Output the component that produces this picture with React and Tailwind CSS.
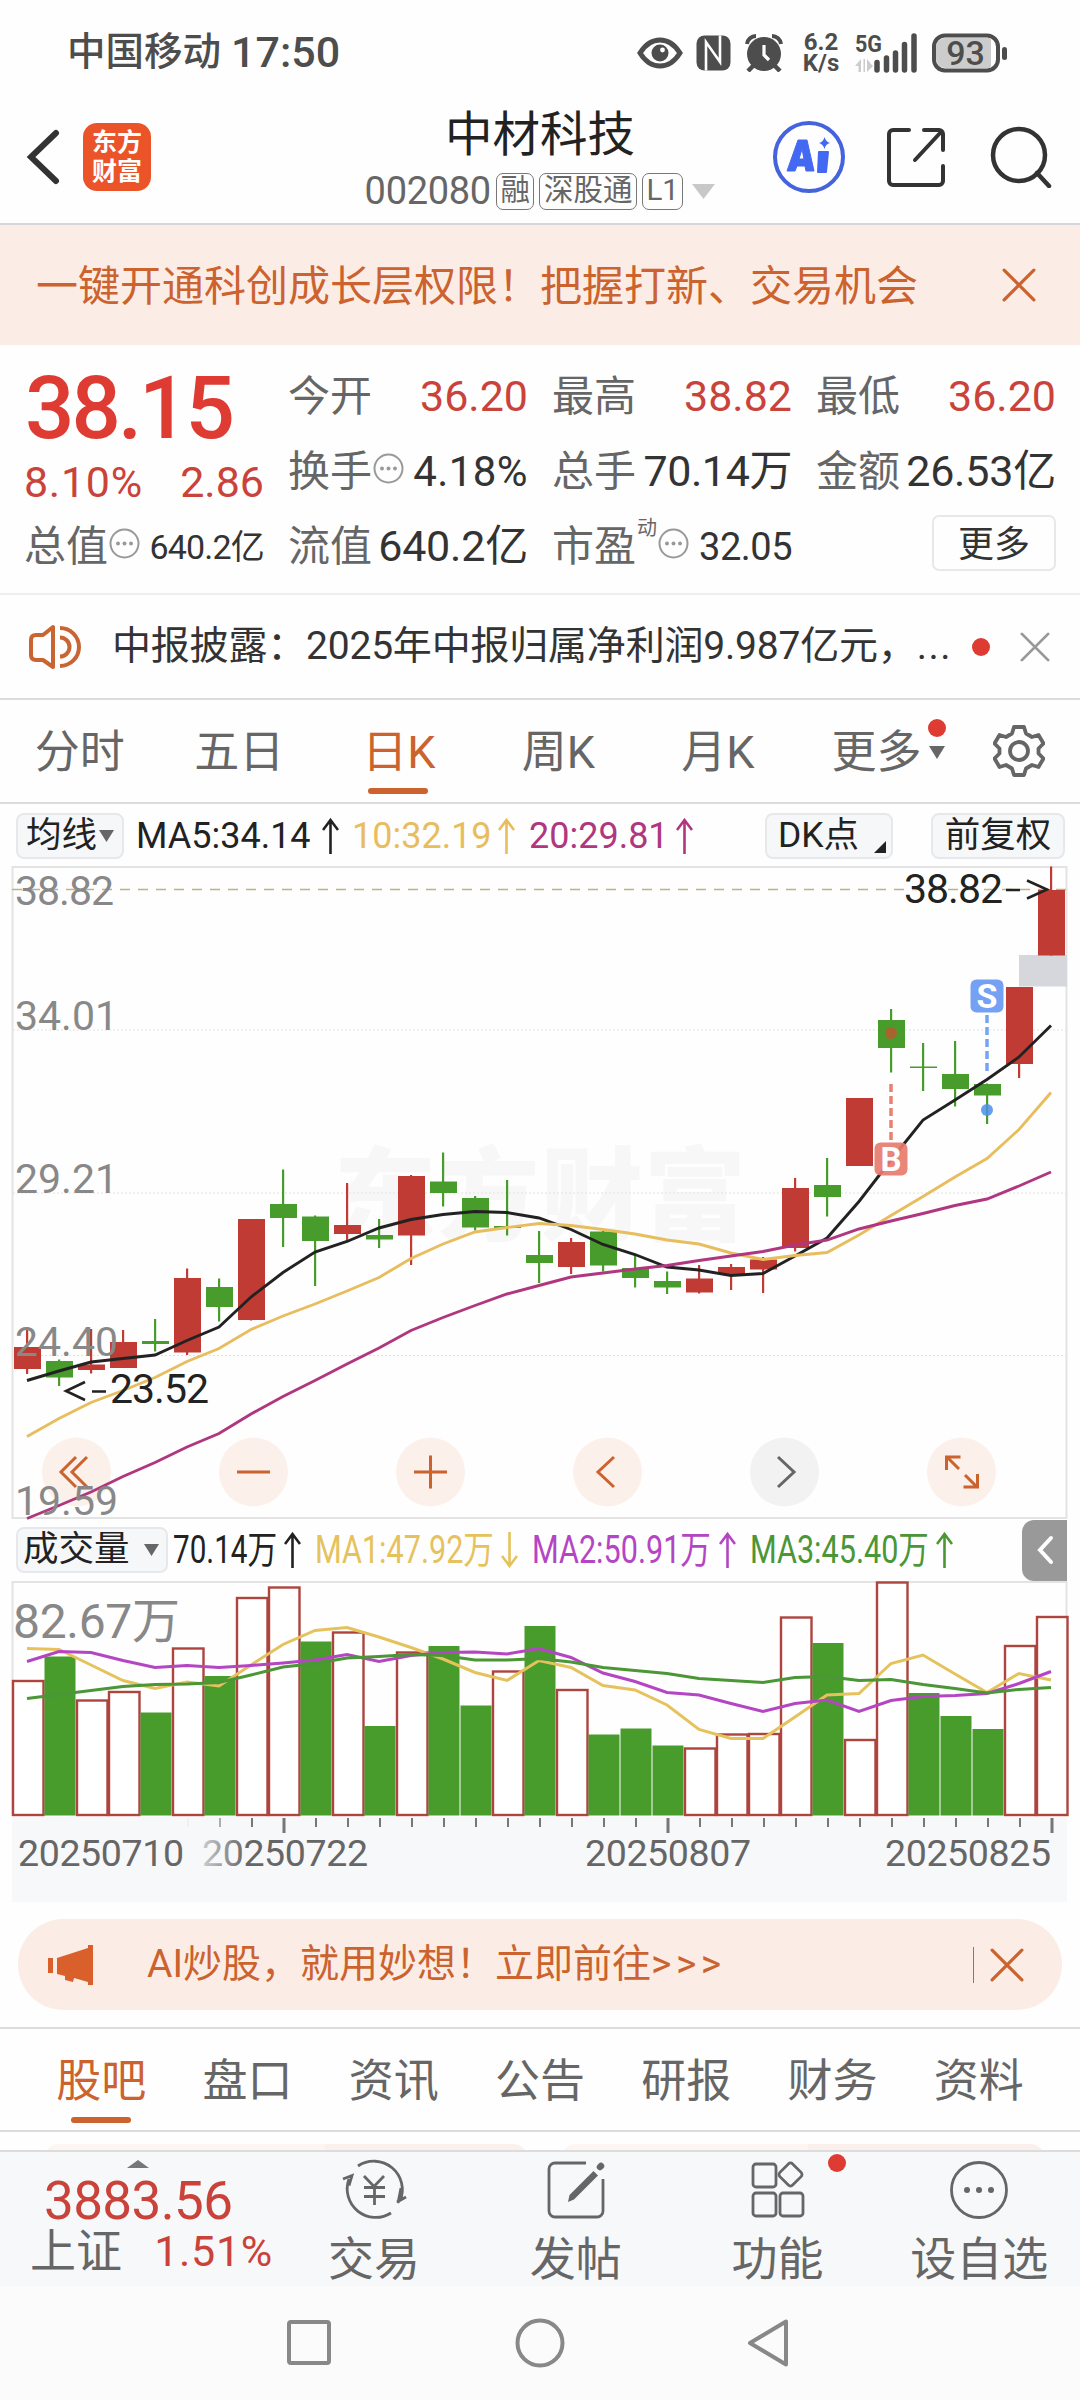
// src/App.jsx
import React, { useState } from 'react'

const RED = '#bf3b34'
const GREEN = '#479c2c'

// [up, high, bodyTop, bodyBottom, low]
const CANDLES = [
  [1, 463.5, 481, 503, 508], [0, 493.5, 495, 511.5, 520], [1, 463, 498.5, 504, 507.5],
  [1, 464, 476, 502, 502], [0, 453, 475, 478, 485.5], [1, 402.5, 412, 486.5, 489],
  [0, 412.5, 421, 441, 455.5], [1, 353, 353, 454, 454.5], [0, 303.5, 338, 352, 381],
  [0, 349.5, 350.5, 375, 420], [1, 317, 359, 368, 374], [0, 353, 369, 373.5, 382],
  [1, 309, 310, 369.5, 399], [0, 286.5, 315.5, 327, 340.5], [0, 330, 332, 361.5, 364.5],
  [0, 314, 360, 362, 369.5], [0, 365, 389, 397, 417], [1, 372, 376, 401, 408],
  [0, 365, 365.5, 399.5, 405.5], [0, 390, 402, 412, 421.5], [0, 405.5, 415, 421.5, 428],
  [1, 399, 412.5, 426.5, 427.5], [1, 398, 401, 408, 424], [1, 391, 393.5, 403.5, 427],
  [1, 312, 322, 382, 385.5], [0, 292, 319, 331, 350.5], [1, 232, 232, 300, 300],
  [0, 143, 154, 182, 206.5], [0, 177, 200.5, 202, 225], [0, 175, 208, 223, 240.5],
  [0, 217.5, 218, 229.5, 258], [1, 121, 121, 198, 212], [1, 0.5, 24, 89.5, 89.5],
]

const MA5 = [514.5, 505, 496, 492.5, 489, 474.5, 461, 431, 406.5, 386, 375.5, 362, 353.5, 348.5, 345.5, 346.5, 352, 363.5, 378.5, 388.5, 401, 404, 409.5, 407.5, 390, 372, 335.5, 294, 254, 234, 213.5, 191, 159.5]
const MA10 = [570.5, 552.5, 536.5, 524.5, 511.5, 495.5, 482.5, 463.5, 450, 438, 425, 411.5, 392.5, 378, 366, 361.5, 357.5, 359.5, 363.5, 368, 374, 378, 387, 393.5, 389.5, 386.5, 369, 349.5, 330.5, 311, 292.5, 263.5, 226.5]
const MA20 = [652.5, 639.5, 626, 610.5, 596.5, 581, 567.5, 548, 530.5, 514.5, 498, 482, 464.5, 451.5, 439.5, 428, 419.5, 411, 407, 403, 399.5, 394.5, 390, 385.5, 379, 374, 363, 355, 347.5, 339.5, 333, 320, 306]

// [up, top]
const VOLUMES = [
  [1, 100], [0, 75.5], [1, 119.5], [1, 111], [0, 131.5], [1, 67.5], [0, 95], [1, 17], [1, 6.5],
  [0, 60.5], [1, 51.5], [0, 145], [1, 71.5], [0, 65], [0, 124.5], [1, 90.5], [0, 45], [1, 109],
  [0, 153.5], [0, 147.5], [0, 164.5], [1, 167.5], [1, 153.5], [1, 153], [1, 36.5], [0, 62],
  [1, 159], [1, 1.5], [0, 112], [0, 135], [0, 148], [1, 65], [1, 36],
]
const VMA1 = [67.5, 68.5, 84, 99.5, 107.5, 101, 105, 84, 63.5, 49.5, 46.5, 56, 66.5, 78, 91.5, 99.5, 79.5, 86.5, 104.5, 109, 124, 148.5, 157.5, 157.5, 136, 114, 112.5, 82.5, 74, 93, 111.5, 92.5, 99]
const VMA2 = [80.5, 70.5, 71.5, 79.5, 86.5, 84.5, 86.5, 84.5, 82, 79, 73.5, 80.5, 74.5, 71.5, 71, 73, 67.5, 76.5, 92, 100.5, 111.5, 114, 122.5, 130.5, 122.5, 119, 130.5, 119.5, 115.5, 114.5, 112.5, 102.5, 90.5]
const VMA3 = [117.5, 113.5, 109.5, 105.5, 103.5, 103, 101.5, 94, 86, 82.5, 77, 75.5, 73.5, 74.5, 79, 79, 77.5, 81, 86.5, 89.5, 92.5, 97.5, 99.5, 101.5, 96.5, 95.5, 99.5, 98.5, 103.5, 107.5, 112, 108.5, 106.5]

const cx = (i) => 27 + i * 32
const points = (values) => values.map((y, i) => `${cx(i)},${y}`).join(' ')

function StatusBar() {
  return (
    <div className="flex h-[105px] items-center pl-[67px] pr-[71px] text-[#4d4d4d]">
      <span className="text-[38.5px] font-medium">中国移动</span>
      <span className="ml-[10px] text-[43px] font-medium">17:50</span>
      <svg className="ml-auto" width="46" height="32" viewBox="0 0 46 32" fill="none">
        <path d="M3 16C8 8 15 3 23 3s15 5 20 13c-5 8-12 13-20 13S8 24 3 16z" stroke="#4d4d4d" strokeWidth="5" />
        <circle cx="23" cy="16" r="8.5" fill="#4d4d4d" />
        <circle cx="25.5" cy="13" r="2.4" fill="#fff" />
      </svg>
      <svg className="ml-[13px]" width="35" height="36" viewBox="0 0 35 36">
        <rect x="0.5" y="0.5" width="34" height="35" rx="8" fill="#4d4d4d" />
        <path d="M10 35.500V7L24 27V0.500" fill="none" stroke="#fff" strokeWidth="2.600" />
      </svg>
      <svg className="ml-[14px]" width="38" height="38" viewBox="0 0 38 38">
        <circle cx="19" cy="20" r="17" fill="#4d4d4d" />
        <path d="M2 10a9 9 0 0 1 9-8M36 10a9 9 0 0 0-9-8" fill="none" stroke="#4d4d4d" strokeWidth="4" />
        <path d="M8 32l-5 5M30 32l5 5" stroke="#4d4d4d" strokeWidth="4.5" />
        <path d="M19 11v10l5 5" fill="none" stroke="#fff" strokeWidth="3.2" />
      </svg>
      <div className="ml-[19px] flex w-[38px] flex-col items-center text-[24px] font-bold leading-[20.500px]">
        <span>6.2</span>
        <span>K/s</span>
      </div>
      <svg className="ml-[15px] overflow-visible" width="64" height="40" viewBox="0 0 64 40">
        <text x="0" y="19" fontSize="24" fontWeight="700" fill="#4d4d4d" textLength="27" lengthAdjust="spacingAndGlyphs">5G</text>
        <path d="M0 33l6-7v13H3.500v-6zM8.500 26v13h1.500v-13zM18 33l-6 6v-13l4 5z" fill="#ccc" />
        <path d="M22 29.500v7.500M31.500 25v12M40.500 20v17M49.500 11.500v25.500M59 3v34" stroke="#4d4d4d" strokeWidth="5.500" strokeLinecap="round" />
      </svg>
      <svg className="ml-[13px]" width="77" height="40" viewBox="0 0 77 40">
        <rect x="2" y="2.500" width="64" height="35" rx="11" fill="#fff" stroke="#4d4d4d" strokeWidth="4" />
        <path d="M13 5H59v30H13a9 9 0 0 1-9-9V14a9 9 0 0 1 9-9z" fill="#ccc" />
        <rect x="70" y="14" width="5" height="13" rx="2.500" fill="#4d4d4d" />
        <text x="33.500" y="32" fontSize="34" fontWeight="500" fill="#4d4d4d" textAnchor="middle">93</text>
      </svg>
    </div>
  )
}

function Header() {
  return (
    <header className="flex h-[120px] items-start border-b-2 border-[#d6d6da]">
      <div className="flex w-[362px] items-center pl-[25px] pt-[18px]">
        <svg width="36" height="56" viewBox="0 0 36 56" fill="none" stroke="#333" strokeWidth="6" strokeLinecap="round">
          <path d="M31 4L6 28l25 24" />
        </svg>
        <div className="ml-[22px] flex h-[68px] w-[68px] flex-col items-center justify-center rounded-[14px] bg-[#ea5428] text-[25px] font-bold leading-[29px] text-white">
          <span>东方</span>
          <span>财富</span>
        </div>
      </div>
      <div className="flex w-[356px] flex-col items-center">
        <h1 className="h-[67px] text-[47.500px] leading-[60px] text-[#222]">中材科技</h1>
        <div className="flex h-[38px] items-center text-[#666]">
          <span className="mr-[5px] text-[38px] tracking-[-0.300px]">002080</span>
          <Tag>融</Tag>
          <Tag>深股通</Tag>
          <Tag>L1</Tag>
          <svg className="ml-[4px]" width="23" height="15"><path d="M0 0h23L11.500 15z" fill="#c8c8c8" /></svg>
        </div>
      </div>
      <div className="flex flex-1 items-center pl-[54px] pt-[14px]">
        <svg width="74" height="76" viewBox="0 0 74 76">
          <circle cx="37" cy="38" r="34" fill="none" stroke="#4463dc" strokeWidth="4" />
          <path d="M26 21h9l7 31h-8l-1-5h-8l-2 5h-8zm4 9l-3 10h5z" fill="#4368f2" stroke="#4368f2" strokeLinejoin="round" />
          <path d="M47 33h9l-2 20h-8z" fill="#4368f2" stroke="#4368f2" strokeWidth="2" strokeLinejoin="round" />
          <path d="M52.500 18q1.500 5 5.500 6q-4.500 1-5.500 6q-1.500-5-5.500-6q4.500-1 5.500-6z" fill="#4368f2" />
        </svg>
        <svg className="ml-[41px]" width="60" height="60" viewBox="0 0 60 60" fill="none" stroke="#333" strokeWidth="4" strokeLinecap="round">
          <path d="M22 3H6a4 4 0 0 0-4 4v47a4 4 0 0 0 4 4h46a4 4 0 0 0 4-4V39M37 3h15a4 4 0 0 1 4 4v16M54 5L28 33" />
        </svg>
        <svg className="ml-[43px]" width="62" height="62" viewBox="0 0 62 62" fill="none" stroke="#333" strokeWidth="4.500" strokeLinecap="round">
          <circle cx="29" cy="29" r="26" />
          <path d="M47 47l12 13" />
        </svg>
      </div>
    </header>
  )
}

function Tag({ children }) {
  return <span className="mr-[5px] flex h-[37px] items-center rounded-[7px] border border-[#777] px-[3.500px] text-[29.500px]">{children}</span>
}

function Cross({ size, color, className }) {
  return (
    <svg className={className} width={size} height={size} viewBox="0 0 32 32" stroke={color} strokeWidth="3" strokeLinecap="round">
      <path d="M2 2l28 28M30 2L2 30" />
    </svg>
  )
}

function Info() {
  return (
    <svg className="mb-[6px] ml-px shrink-0" width="31" height="31" viewBox="0 0 31 31">
      <circle cx="15.500" cy="15.500" r="14" fill="none" stroke="#999" strokeWidth="2" />
      <circle cx="9" cy="15.500" r="2" fill="#999" />
      <circle cx="15.500" cy="15.500" r="2" fill="#999" />
      <circle cx="22" cy="15.500" r="2" fill="#999" />
    </svg>
  )
}

function Stat({ label, value, up, info, sup, size = 'text-[43px]' }) {
  return (
    <div className="flex h-[75px] w-[239px] items-center whitespace-nowrap">
      <span className="-ml-px text-[42px] text-[#666]">{label}</span>
      {sup && <span className="mb-[38px] ml-px text-[20px] text-[#666]">{sup}</span>}
      {info && <Info />}
      <span className={`ml-auto ${size} ${up ? 'text-[#c9433b]' : 'text-[#333]'}`}>{value}</span>
    </div>
  )
}

function Quote() {
  return (
    <section className="flex h-[250px] gap-[25px] border-b-2 border-[#eee] pl-[25px] pt-[14px]">
      <div className="w-[239px]">
        <div className="h-[96px] text-[87px] font-medium leading-[98px] tracking-[-3px] text-[#de3b33]">38.15</div>
        <div className="-ml-px flex h-[54px] items-center justify-between text-[43px] text-[#c9433b]">
          <span className="tracking-[0.700px]">8.10%</span>
          <span>2.86</span>
        </div>
        <Stat label="总值" value="640.2亿" info size="text-[34px] tracking-[-0.800px]" />
      </div>
      <div>
        <Stat label="今开" value="36.20" up />
        <Stat label="换手" value="4.18%" info size="text-[42px] tracking-[0.400px]" />
        <Stat label="流值" value="640.2亿" size="text-[43px] tracking-[-0.200px]" />
      </div>
      <div>
        <Stat label="最高" value="38.82" up />
        <Stat label="总手" value="70.14万" size="text-[43px] tracking-[-0.400px]" />
        <Stat label="市盈" value="32.05" info sup="动" size="text-[38px] tracking-[-0.500px]" />
      </div>
      <div>
        <Stat label="最低" value="36.20" up />
        <Stat label="金额" value="26.53亿" size="text-[43px] tracking-[-0.200px]" />
        <button className="ml-auto mt-[6px] flex h-[56px] w-[124px] items-center justify-center rounded-[7px] border-2 border-[#e8e8e8] pt-[3px] text-[36px] text-[#333]">更多</button>
      </div>
    </section>
  )
}

function Notice() {
  return (
    <div className="flex h-[105px] items-center border-b-2 border-[#dcdcdc] pl-[28px]">
      <svg width="54" height="46" viewBox="0 0 54 46" fill="none" stroke="#c96533" strokeWidth="4">
        <path d="M25 3v40l-10-7H8q-5 0-5-5V16q0-5 5-5h7z" strokeLinejoin="round" />
        <path d="M32 13.500a9.500 9.500 0 0 1 0 19M32 4a19 19 0 0 1 0 38" />
      </svg>
      <p className="ml-[30px] w-[853px] whitespace-nowrap text-[39px] tracking-[-0.200px] text-[#333]">中报披露：2025年中报归属净利润9.987亿元，<span className="tracking-[1.500px]">...</span></p>
      <span className="ml-[7px] h-[18px] w-[18px] shrink-0 rounded-full bg-[#de3b33]"></span>
      <Cross className="ml-[30px] shrink-0" size={30} color="#999" />
    </div>
  )
}

function Gear() {
  return (
    <svg width="52" height="52" viewBox="0 0 52 52" fill="none" stroke="#666" strokeWidth="3.800" strokeLinejoin="round">
      <path d="M21 2h10l2 6.500 6 3.500 6.500-2 5 8.500-5 5v5l5 5-5 8.500-6.500-2-6 3.500-2 6.500H21l-2-6.500-6-3.500-6.500 2-5-8.500 5-5v-5l-5-5 5-8.500 6.500 2 6-3.500z" />
      <circle cx="26" cy="26" r="9" />
    </svg>
  )
}

function PeriodTabs() {
  const [active, setActive] = useState('日K')
  return (
    <nav className="flex h-[104px] items-center border-b-2 border-[#dcdcdc] text-[45px] text-[#666]">
      {['分时', '五日', '日K', '周K', '月K'].map((tab) => (
        <button key={tab} className={`relative h-full w-[159.500px] pt-[3px] ${active === tab ? 'text-[#cc622e]' : ''}`} onClick={() => setActive(tab)}>
          {tab}
          {active === tab && <span className="absolute bottom-[8px] left-[49px] h-[6px] w-[60px] rounded-full bg-[#cc622e]"></span>}
        </button>
      ))}
      <button className="relative ml-[34px] flex items-center pt-[3px]">
        更多
        <svg className="ml-[7px]" width="16" height="13"><path d="M0 0h16L8 13z" fill="#666" /></svg>
        <span className="absolute -top-[8px] right-[-1px] h-[18px] w-[18px] rounded-full bg-[#de3b33]"></span>
      </button>
      <div className="ml-[48px]"><Gear /></div>
    </nav>
  )
}

function Chip({ children, className }) {
  return <button className={`flex h-[46px] items-center rounded-[8px] border-2 border-[#e6e8ec] bg-[#f6f7f9] text-[35.500px] text-[#222] ${className}`}>{children}</button>
}

function Arrow({ color, down, className = '' }) {
  return (
    <svg className={`${down ? 'rotate-180' : ''} shrink-0 ${className}`} width="17" height="36" viewBox="0 0 17 36" fill="none" stroke={color} strokeWidth="2.600">
      <path d="M8.500 36V2M1 12l7.500-10L16 12" />
    </svg>
  )
}

function MaLegend() {
  return (
    <div className="flex h-[62px] items-center pl-[16px] pr-[15px] pt-[2px] text-[36px]">
      <Chip className="w-[108px] pl-[8px]">
        均线
        <svg className="ml-[2px]" width="15" height="12"><path d="M0 0h15L7.500 12z" fill="#666" /></svg>
      </Chip>
      <span className="ml-[12px] w-[186px] text-[#222]">MA5:34.14</span>
      <Arrow color="#222" />
      <span className="ml-[13px] w-[146px] text-[#e8bd5e]">10:32.19</span>
      <Arrow color="#e8bd5e" />
      <span className="ml-[14px] w-[147px] text-[#b0367f]">20:29.81</span>
      <Arrow color="#b0367f" />
      <Chip className="ml-auto w-[128px] justify-between pl-[11px] pr-[5px]">
        DK点
        <svg className="mt-[22px]" width="12" height="12"><path d="M12 0v12H0z" fill="#222" /></svg>
      </Chip>
      <Chip className="ml-[38px] w-[134px] justify-center">前复权</Chip>
    </div>
  )
}

const CONTROLS = [
  ['M76 -15L61 0l15 15M87 -15L72 0l15 15', 76.5],
  ['M237 0h33', 253.5],
  ['M414 0h33M430.500 -16.500v33', 430.5],
  ['M614 -15L598 0l16 15', 607.5],
  ['M778 -15L794 0l-16 15', 784.5],
  ['M946.500 -2v-13h14M947 -15l12 12M977.500 2v13h-14M977 15l-12 -12', 961.5],
]

function KChart() {
  return (
    <svg className="block overflow-visible" width="1080" height="653" viewBox="0 0 1080 653">
      <rect x="12.500" y="1" width="1054" height="651" fill="none" stroke="#e3e3e3" strokeWidth="2" />
      <text x="334" y="367" fontSize="102" fontWeight="900" fill="#f7f7f7" textLength="412">东方财富</text>
      {[164, 327, 489.5].map((y) => (
        <line key={y} x1="13" x2="1066" y1={y} y2={y} stroke="#e2e2e2" strokeDasharray="2 2" />
      ))}
      <line x1="12" x2="1066" y1="23.500" y2="23.500" stroke="#c4b083" strokeWidth="1.500" strokeDasharray="10 8" />
      <rect x="1019" y="89" width="48" height="31.500" fill="#d6d7dd" />
      {CONTROLS.map(([d, x]) => (
        <g key={x}>
          <circle cx={x} cy="606" r="34.500" fill={x === 784.5 ? '#f2f2f2' : '#fbf1ea'} />
          <path d={d} transform="translate(0 606)" fill="none" stroke={x === 784.5 ? '#666' : '#cc622e'} strokeWidth="3" />
        </g>
      ))}
      {CANDLES.map(([up, high, top, bottom, low], i) => (
        <g key={i} fill={up ? RED : GREEN}>
          <rect x={cx(i) - 1} y={high} width="2.200" height={low - high} />
          <rect x={cx(i) - 13} y={top} width="27" height={Math.max(bottom - top, 1.5)} />
        </g>
      ))}
      <g fill="none" strokeWidth="2.900">
        <polyline points={points(MA5)} stroke="#222" />
        <polyline points={points(MA10)} stroke="#e8bd5e" />
        <polyline points={points(MA20)} stroke="#b0367f" />
      </g>

      {/* sell / buy markers */}
      <line x1="987" x2="987" y1="149" y2="205" stroke="#74a5f4" strokeWidth="3.500" strokeDasharray="8 4" />
      <circle cx="987" cy="244" r="6" fill="#4b8ee8" fillOpacity="0.850" />
      <rect x="970.500" y="113.500" width="33" height="33" rx="6" fill="#74a1f3" />
      <text x="987" y="142" fontSize="34" fontWeight="700" fill="#fff" textAnchor="middle">S</text>
      <line x1="891" x2="891" y1="218" y2="274" stroke="#e88072" strokeWidth="3.500" strokeDasharray="8 4" />
      <circle cx="891" cy="167" r="6" fill="#a8642f" />
      <rect x="874.500" y="276.500" width="33" height="33" rx="6" fill="#e77c6e" fillOpacity="0.920" />
      <text x="891" y="304.500" fontSize="33" fontWeight="700" fill="#fff" textAnchor="middle">B</text>

      <g fontSize="41" fill="#888">
        <text x="15" y="39" textLength="99">38.82</text>
        <text x="15" y="164">34.01</text>
        <text x="15" y="327">29.21</text>
        <text x="15" y="489.500">24.40</text>
        <text x="15" y="648.500">19.59</text>
      </g>
      <g fontSize="41" fill="#222">
        <text x="110" y="537" textLength="99">23.52</text>
        <text x="904" y="36.500" textLength="99">38.82</text>
      </g>
      <path d="M85 516l-19 9 19 9M92 525.500h14M1027 14.500l20 9-20 9M1006 24h14" fill="none" stroke="#222" strokeWidth="2.600" />
    </svg>
  )
}

function VolumeItem({ color, text, down, width, scale = 'scale-x-[0.805]' }) {
  return (
    <div className="flex items-center">
      <span className={`whitespace-nowrap ${width}`}>
        <span className={`inline-block origin-left text-[38px] ${scale}`} style={{ color }}>{text}</span>
      </span>
      <Arrow color={color} down={down} />
    </div>
  )
}

function VolumeLegend() {
  return (
    <div className="flex h-[62px] items-center pl-[16px] pr-[13px]">
      <Chip className="w-[152px] shrink-0 pl-[5px]">
        成交量
        <svg className="ml-[14px]" width="15" height="12"><path d="M0 0h15L7.500 12z" fill="#666" /></svg>
      </Chip>
      <div className="ml-[5px] flex gap-[14px]">
        <VolumeItem color="#222" text="70.14万" width="w-[111px]" scale="scale-x-[0.780]" />
        <VolumeItem color="#e6c25c" text="MA1:47.92万" down width="w-[186px]" />
        <VolumeItem color="#b445c3" text="MA2:50.91万" width="w-[187px]" />
        <VolumeItem color="#4b9636" text="MA3:45.40万" width="w-[186px]" />
      </div>
      <button className="ml-auto flex h-[61px] w-[45px] items-center justify-center rounded-l-[12px] bg-[#999]">
        <svg width="18" height="30" viewBox="0 0 18 30" fill="none" stroke="#fff" strokeWidth="4" strokeLinecap="round"><path d="M15 3L4 15l11 12" /></svg>
      </button>
    </div>
  )
}

function VolumeChart() {
  return (
    <svg className="block" width="1080" height="321" viewBox="0 0 1080 321">
      <defs>
        <linearGradient id="fade" x1="0" x2="1" y1="0" y2="0">
          <stop offset="0" stopColor="#f7f8fa" />
          <stop offset="1" stopColor="#f7f8fa" stopOpacity="0" />
        </linearGradient>
      </defs>
      <path d="M12.500 235V1H1066.500V235" fill="none" stroke="#e3e3e3" strokeWidth="2" />
      <text x="13" y="56.500" fontSize="48" fill="#888" textLength="167">82.67万</text>
      {VOLUMES.map(([up, top], i) => up
        ? <rect key={i} x={13 + i * 32} y={top} width="30.500" height={234 - top} fill="#fff" stroke="#ad443e" strokeWidth="2.400" />
        : <rect key={i} x={12.5 + i * 32} y={top} width="31" height={234.5 - top} fill={GREEN} />
      )}
      <g fill="none" strokeWidth="3">
        <polyline points={points(VMA1)} stroke="#e6c25c" />
        <polyline points={points(VMA2)} stroke="#b445c3" />
        <polyline points={points(VMA3)} stroke="#4b9636" />
      </g>
      <rect x="12" y="236" width="1055" height="85" fill="#f7f8fa" />
      {VOLUMES.map((_, i) => {
        const major = i === 8 || i === 20 || i === 32
        return i > 4 && <line key={i} x1={cx(i) + 1} x2={cx(i) + 1} y1="237" y2={major ? 252 : 246} stroke="#777" strokeWidth={major ? 3 : 2} />
      })}
      <g fontSize="37.500" fill="#666">
        <text x="202" y="285" textLength="166">20250722</text>
        <rect x="184" y="237" width="62" height="60" fill="url(#fade)" />
        <text x="18" y="285" textLength="166">20250710</text>
        <text x="585" y="285" textLength="166">20250807</text>
        <text x="885" y="285" textLength="166">20250825</text>
      </g>
    </svg>
  )
}

function Promo() {
  return (
    <div className="mx-[18px] my-[17px] flex h-[91px] items-center rounded-full bg-[#fbede5] pl-[30px] pr-[38px] text-[#cc622e]">
      <svg width="46" height="40" viewBox="0 0 46 40" fill="#da602b">
        <path d="M0 13h5v15H0zM9 13l31-10V0h5v40h-5v-3l-14-4-1 4-8-2v-4l-8-2z" />
      </svg>
      <span className="ml-[53px] text-[39px]">AI炒股，就用妙想！立即前往<span className="tracking-[4.500px]">&gt;&gt;&gt;</span></span>
      <span className="ml-auto h-[36px] w-[1.500px] bg-[#cc622e]"></span>
      <Cross className="ml-[16px]" size={34} color="#cc622e" />
    </div>
  )
}

function InfoTabs() {
  const [active, setActive] = useState('股吧')
  return (
    <nav className="flex h-[105px] border-y-2 border-[#dcdcdc] px-[28px] text-[45px] text-[#666]">
      {['股吧', '盘口', '资讯', '公告', '研报', '财务', '资料'].map((tab) => (
        <button key={tab} className={`relative flex-1 pt-[4px] ${active === tab ? 'text-[#cc622e]' : ''}`} onClick={() => setActive(tab)}>
          {tab}
          {active === tab && <span className="absolute bottom-[7px] left-[43px] h-[6px] w-[60px] rounded-full bg-[#cc622e]"></span>}
        </button>
      ))}
    </nav>
  )
}

const ACTIONS = [
  ['交易', (
    <>
      <path d="M14 6a28.500 28.500 0 0 1 42 35M53 42l9-5M54 43l3-15M47 53a28.500 28.500 0 0 1-42-34M-1 19l9-3.500-3 10" />
      <path d="M20 16l10 10.500L40 16M20 27.500h21M20 36.500h21M30.500 27v18" />
    </>
  )],
  ['发帖', (
    <>
      <path d="M40 3H9a6 6 0 0 0-6 6v42a6 6 0 0 0 6 6h42a6 6 0 0 0 6-6V19" />
      <path d="M47.500 11l4.500 4.500-24 24-6 2.500 1.500-7z" fill="#666" stroke="none" />
      <path d="M54 7l1-1" strokeWidth="6.500" strokeLinecap="round" />
    </>
  )],
  ['功能', (
    <>
      <rect x="6" y="4" width="23" height="23" rx="3" />
      <rect x="6" y="33" width="23" height="23" rx="3" />
      <rect x="33" y="33" width="23" height="23" rx="3" />
      <rect x="34.500" y="5.500" width="18" height="18" rx="3" transform="rotate(45 43.500 14.500)" />
    </>
  )],
  ['设自选', (
    <>
      <circle cx="30" cy="30" r="27.500" />
      <path d="M18 30h.01M30 30h.01M42 30h.01" strokeWidth="6" strokeLinecap="round" />
    </>
  )],
]

function BottomBar() {
  return (
    <div className="flex h-[136px] border-t-2 border-[#dcdcdc] bg-[#f7f8fa]">
      <div className="flex w-[273px] flex-col">
        <svg className="ml-[127px] mt-[8px]" width="22" height="8"><path d="M0 8h22L11 0z" fill="#777" /></svg>
        <div className="pl-[44px] text-[53px] leading-[66px] tracking-[-0.600px] text-[#c9433b]">3883.56</div>
        <div className="flex h-[34px] items-center justify-between pl-[30px] text-[46px] text-[#666]">
          上证
          <span className="text-[43px] tracking-[0.700px] text-[#c9433b]">1.51%</span>
        </div>
      </div>
      {ACTIONS.map(([label, icon]) => (
        <button key={label} className="relative flex flex-1 flex-col items-center pt-[8px]">
          <svg className="overflow-visible" width="60" height="60" viewBox="0 0 60 60" fill="none" stroke="#666" strokeWidth="2.800">{icon}</svg>
          <span className="mt-[6px] text-[46px] leading-[66px] text-[#666]">{label}</span>
          {label === '功能' && <span className="absolute right-[32px] top-[2px] h-[18px] w-[18px] rounded-full bg-[#de3b33]"></span>}
        </button>
      ))}
    </div>
  )
}

function SystemNav() {
  return (
    <div className="flex h-[114px] justify-center gap-[182px] bg-[#fbfbfb] pt-[32px]">
      <svg width="48" height="50" viewBox="0 0 48 50" fill="none" stroke="#888" strokeWidth="4"><rect x="4" y="4" width="40" height="41" rx="2" /></svg>
      <svg width="50" height="50" viewBox="0 0 50 50" fill="none" stroke="#888" strokeWidth="4"><circle cx="25" cy="25" r="22.500" /></svg>
      <svg width="48" height="50" viewBox="0 0 48 50" fill="none" stroke="#888" strokeWidth="4" strokeLinejoin="round"><path d="M3 25L39 3.500v43z" /></svg>
    </div>
  )
}

export default function App() {
  return (
    <div className="h-[2400px] w-[1080px] overflow-hidden bg-[#fefefe] font-['Roboto','Noto_Sans_CJK_SC',sans-serif] leading-none">
      <StatusBar />
      <Header />
      <div className="flex h-[120px] items-center justify-between bg-[#fbede5] pl-[36px] pr-[44px]">
        <span className="pt-[3px] text-[42px] text-[#cc622e]">一键开通科创成长层权限！把握打新、交易机会</span>
        <Cross size={34} color="#cc622e" />
      </div>
      <Quote />
      <Notice />
      <PeriodTabs />
      <MaLegend />
      <KChart />
      <VolumeLegend />
      <VolumeChart />
      <Promo />
      <InfoTabs />
      <div className="flex h-[18px] gap-[33px] overflow-hidden pl-[44px] pr-[35px] pt-[12px]">
        <div className="h-[30px] flex-1 rounded-[20px] bg-linear-to-r from-[#fdf5f1] from-58% to-[#fbf0ec] to-58%"></div>
        <div className="h-[30px] flex-1 rounded-[20px] bg-linear-to-r from-[#fdf5f1] from-51% to-[#fbefec] to-51%"></div>
      </div>
      <BottomBar />
      <SystemNav />
    </div>
  )
}
